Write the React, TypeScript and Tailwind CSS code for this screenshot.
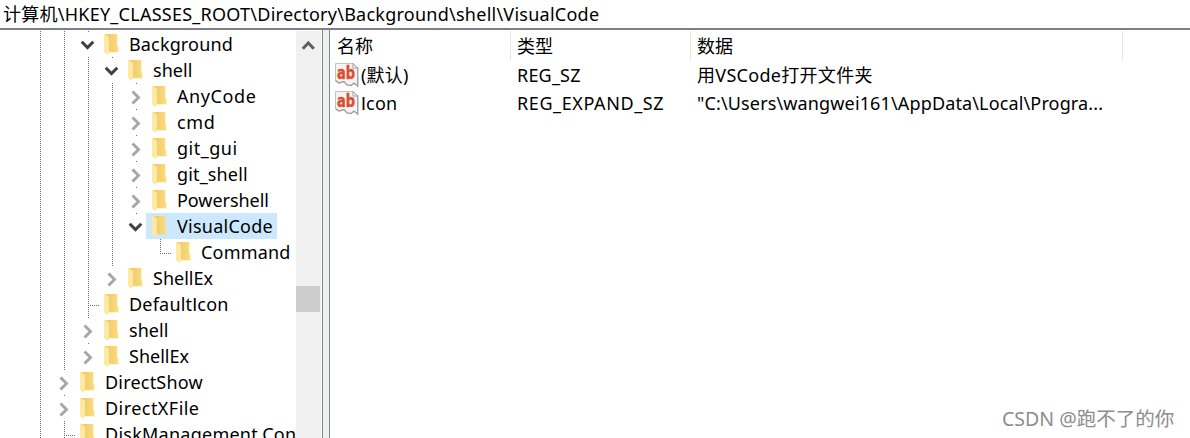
import clsx from "clsx";

type Cell = "line" | "tee" | "end" | "open" | "closed" | "none";

type TreeItem = {
  name: string;
  cells: Cell[];
  selected?: boolean;
  spacing: string;
};

const treeItems: TreeItem[] = [
  { name: "Background", cells: ["line", "line", "open"], spacing: "tracking-[0.15px]" },
  { name: "shell", cells: ["line", "line", "line", "open"], spacing: "tracking-[0.05px]" },
  { name: "AnyCode", cells: ["line", "line", "line", "line", "closed"], spacing: "tracking-[0.6px]" },
  { name: "cmd", cells: ["line", "line", "line", "line", "closed"], spacing: "tracking-[0.6px]" },
  { name: "git_gui", cells: ["line", "line", "line", "line", "closed"], spacing: "tracking-[0.5px]" },
  { name: "git_shell", cells: ["line", "line", "line", "line", "closed"], spacing: "tracking-[0.15px]" },
  { name: "Powershell", cells: ["line", "line", "line", "line", "closed"], spacing: "tracking-[-0.05px]" },
  { name: "VisualCode", cells: ["line", "line", "line", "line", "open"], selected: true, spacing: "tracking-[0.25px]" },
  { name: "Command", cells: ["line", "line", "line", "line", "none", "end"], spacing: "tracking-[0.2px]" },
  { name: "ShellEx", cells: ["line", "line", "line", "closed"], spacing: "tracking-[0px]" },
  { name: "DefaultIcon", cells: ["line", "line", "tee"], spacing: "tracking-[0.2px]" },
  { name: "shell", cells: ["line", "line", "closed"], spacing: "tracking-[0.05px]" },
  { name: "ShellEx", cells: ["line", "line", "closed"], spacing: "tracking-[0px]" },
  { name: "DirectShow", cells: ["line", "closed"], spacing: "tracking-[0.2px]" },
  { name: "DirectXFile", cells: ["line", "closed"], spacing: "tracking-[0.45px]" },
  { name: "DiskManagement.Con", cells: ["line", "tee"], spacing: "tracking-[0.25px]" },
];

const values = [
  { name: "(默认)", type: "REG_SZ", data: "用VSCode打开文件夹", typeSpacing: "tracking-[0.2px]", dataSpacing: "tracking-[0.3px]" },
  { name: "Icon", type: "REG_EXPAND_SZ", data: '"C:\\Users\\wangwei161\\AppData\\Local\\Progra...', typeSpacing: "tracking-[0.6px]", dataSpacing: "tracking-[0.14px]" },
];

// Capital I is set in a face that draws it without serifs
function Label({ text, className }: { text: string; className?: string }) {
  return (
    <span className={className}>
      {text.split(/(I)/).map((part, i) => (part === "I" ? <span key={i} className="font-['Roboto',sans-serif]">I</span> : part))}
    </span>
  );
}

function TreeCell({ kind }: { kind: Cell }) {
  return (
    <svg width="24" height="26" viewBox="0 0 24 26" className="shrink-0" fill="none">
      {(kind === "line" || kind === "tee") && <path d="M12.5 0V26" stroke="#6d6d6d" strokeDasharray="1 1" />}
      {kind === "end" && <path d="M12.5 0V15" stroke="#6d6d6d" strokeDasharray="1 1" />}
      {(kind === "tee" || kind === "end") && <path d="M12 14.5H23" stroke="#6d6d6d" strokeDasharray="1 1" />}
      {(kind === "open" || kind === "closed") && <path d="M12 0.5H13" stroke="#6d6d6d" />}
      {kind === "open" && <path d="M5.7 10.8L11.5 16.6L17.3 10.8" stroke="#404040" strokeWidth="3" />}
      {kind === "closed" && <path d="M8.5 8.5L14.5 14.5L8.5 20.5" stroke="#a6a6a6" strokeWidth="2.9" />}
    </svg>
  );
}

function Folder() {
  return (
    <svg width="15" height="22" viewBox="0 0 15 22" className="mt-0.5 shrink-0">
      <defs>
        <linearGradient id="folder-back" x1="0" x2="1" y1="0" y2="0">
          <stop offset="0.3" stopColor="#f3cd69" />
          <stop offset="1" stopColor="#fbdc80" />
        </linearGradient>
      </defs>
      <path d="M1 0H13.3V11.5L14.3 13V18.3H1Z" fill="url(#folder-back)" />
      <path d="M0 0H1L5 3V17.5L4 21L0 18.3Z" fill="#ffe8a3" />
    </svg>
  );
}

function StringIcon() {
  return (
    <svg width="24" height="24" viewBox="0 0 24 24" className="shrink-0 overflow-visible">
      <path d="M0.5 0.5H18L22.5 5V23L19 20L16 22.5L12 22L9 18.5L4 20L0.5 17.5Z" fill="#f4f4f4" stroke="#c2c2c2" />
      <path d="M22.8 4.5V23.2L19 20.2L16 22.6L12 22L9 18.6L4 20L0.5 17.6" fill="none" stroke="#a0a0a0" strokeWidth="1.3" />
      <path d="M18 0.5V5H22.5Z" fill="#fff" stroke="#9a9a9a" />
      <text x="2" y="16" fontSize="17" fontWeight="700" fill="#dc4f2e" stroke="#dc4f2e" strokeWidth="0.5" className="font-['DejaVu_Sans',sans-serif] tracking-normal" textLength="18" lengthAdjust="spacingAndGlyphs">
        ab
      </text>
    </svg>
  );
}

export default function App() {
  return (
    <div className="flex h-[438px] w-[1190px] flex-col overflow-hidden bg-white font-['Noto_Sans','Noto_Sans_CJK_SC',sans-serif] text-[18px] text-black">
      {/* Address bar */}
      <div className="flex h-[30px] shrink-0 items-center border-b-2 border-[#817e87] pl-[3px] whitespace-nowrap">
        <span className="tracking-[0.25px]">计算机\HKEY_CLASSES_ROOT\Directory\Background\shell\VisualCode</span>
      </div>

      <div className="flex min-h-0 flex-1">
        {/* Key tree */}
        <div className="w-[296px] overflow-hidden pt-px pl-7">
          {treeItems.map((item, index) => (
            <div key={index} className="flex h-[26px] items-center">
              {item.cells.map((kind, i) => (
                <TreeCell key={i} kind={kind} />
              ))}
              <div className={clsx("-ml-0.5 flex h-[26px] items-center pr-1 pl-1.5 whitespace-nowrap", item.selected && "bg-[#cce8ff]")}>
                <Folder />
                <Label text={item.name} className={clsx("ml-2.5", item.spacing)} />
              </div>
            </div>
          ))}
        </div>

        {/* Scrollbar */}
        <div className="mt-px flex w-[25px] shrink-0 flex-col bg-[#f0f0f0]">
          <svg width="24" height="32" viewBox="0 0 24 32" fill="none" className="shrink-0">
            <path d="M6.8 17.8L12.3 11.9L17.8 17.8" stroke="#606060" strokeWidth="3" />
          </svg>
          <div className="mt-[223px] h-[26px] w-6 bg-[#cdcdcd]" />
        </div>
        <div className="ml-px w-2 shrink-0 border-x border-[#828790] bg-[#f0f0f0]" />

        {/* Value list */}
        <div className="min-w-0 flex-1 whitespace-nowrap">
          <div className="mt-px flex h-[30px] items-center">
            <span className="flex h-full w-[181px] items-center border-r border-[#e5e5e5] pt-px pl-[7px]">名称</span>
            <span className="flex h-full w-[180px] items-center border-r border-[#e5e5e5] pt-px pl-1.5">类型</span>
            <span className="flex h-full w-[432px] items-center border-r border-[#e5e5e5] pt-px pl-1.5">数据</span>
          </div>
          {values.map((value) => (
            <div key={value.name} className="flex h-7 items-center">
              <div className="flex w-[187px] items-center gap-0.5 pl-[5px]">
                <StringIcon />
                <Label text={value.name} className="tracking-[0.2px]" />
              </div>
              <span className={clsx("w-[180px]", value.typeSpacing)}>{value.type}</span>
              <span className={value.dataSpacing}>{value.data}</span>
            </div>
          ))}
          <div className="mt-[287px] ml-[672px] text-[19.5px] text-[#8d8d8d]">CSDN @跑不了的你</div>
        </div>
      </div>
    </div>
  );
}
